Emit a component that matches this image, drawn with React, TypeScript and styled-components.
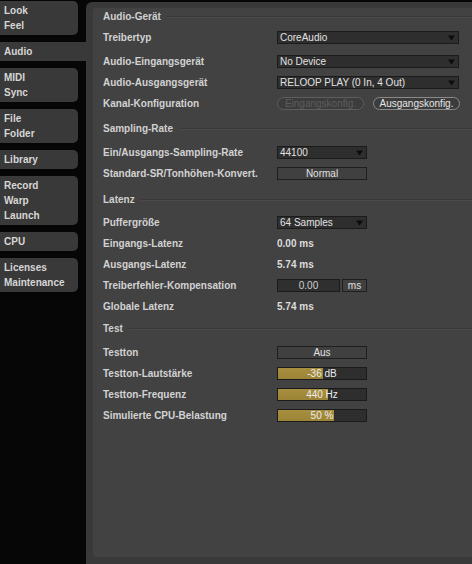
import React from 'react';
import styled, { createGlobalStyle, css } from 'styled-components';

const Global = createGlobalStyle`
  html, body { margin: 0; padding: 0; background: #060606; }
  body {
    font-family: "Liberation Sans", Arial, sans-serif;
    font-size: 10px;
    -webkit-font-smoothing: antialiased;
  }
  #root { width: 472px; height: 564px; overflow: hidden; }
`;

const Page = styled.div`
  display: flex;
  width: 472px;
  height: 564px;
  background: #060606;
  overflow: hidden;
`;

const Sidebar = styled.nav`
  width: 78px;
  flex: none;
  display: flex;
  flex-direction: column;
  gap: 7px;
  padding-top: 1px;
  margin-right: 8px;
  position: relative;
  z-index: 1;
`;

const Tab = styled.div<{ $selected?: boolean }>`
  background: #393939;
  border-radius: 0 5px 5px 0;
  padding: 2px 0 2px 4px;
  color: #d6d6d6;
  font-weight: bold;
  line-height: 15px;
  ${(p) =>
    p.$selected &&
    css`
      margin-right: -8px;
      border-radius: 0;
    `}
`;

const TabLine = styled.div`
  white-space: nowrap;
`;

const Frame = styled.main`
  flex: 1;
  min-width: 0;
  margin-top: 2px;
  background: #393939;
  border-radius: 6px 0 0 0;
  padding: 6px 0 7px 7px;
  display: flex;
`;

const Panel = styled.div`
  flex: 1;
  background: #424242;
  border-radius: 3px 0 0 3px;
  padding: 0 0 0 10px;
  display: flex;
  flex-direction: column;
`;

const Header = styled.div<{ $mt?: number }>`
  display: flex;
  align-items: center;
  height: 16px;
  margin-top: ${(p) => p.$mt ?? 0}px;
  color: #d0d0d0;
  font-weight: bold;
`;

const HeaderRule = styled.div`
  flex: 1;
  height: 1px;
  margin-left: 6px;
  background: #383838;
  box-shadow: 0 1px 0 #4a4a4a;
`;

const Row = styled.div<{ $mt?: number }>`
  display: flex;
  align-items: center;
  height: 21px;
  margin-top: ${(p) => p.$mt ?? 0}px;
`;

const Label = styled.span`
  width: 174px;
  flex: none;
  font-weight: bold;
  color: #d2d2d2;
  white-space: nowrap;
`;

const Select = styled.div<{ $w: number }>`
  width: ${(p) => p.$w}px;
  height: 13px;
  box-sizing: border-box;
  border: 1px solid #1b1b1b;
  background: #2e2e2e;
  color: #e2e2e2;
  display: flex;
  align-items: center;
  padding-left: 2px;
  white-space: nowrap;
`;

const Arrow = styled.svg`
  margin-left: auto;
  margin-right: 3px;
  flex: none;
`;

const Pills = styled.div`
  display: flex;
  gap: 9px;
`;

const Pill = styled.div<{ $disabled?: boolean }>`
  width: 87px;
  height: 13px;
  box-sizing: border-box;
  border-radius: 7px;
  border: 1px solid ${(p) => (p.$disabled ? '#5e5e5e' : '#8a8a8a')};
  background: #3c3c3c;
  color: ${(p) => (p.$disabled ? '#5c5c5c' : '#e6e6e6')};
  display: flex;
  align-items: center;
  justify-content: center;
  white-space: nowrap;
`;

const Toggle = styled.div<{ $w?: number }>`
  width: ${(p) => p.$w ?? 90}px;
  height: 13px;
  box-sizing: border-box;
  border: 1px solid #1e1e1e;
  background: #404040;
  color: #e0e0e0;
  display: flex;
  align-items: center;
  justify-content: center;
`;

const Value = styled.span`
  font-weight: bold;
  color: #dcdcdc;
`;

const NumberGroup = styled.div`
  display: flex;
  gap: 2px;
`;

const NumberBox = styled.div`
  width: 63px;
  height: 13px;
  box-sizing: border-box;
  border: 1px solid #1b1b1b;
  background: #2f2f2f;
  color: #cfcfcf;
  display: flex;
  align-items: center;
  justify-content: center;
`;

const Slider = styled.div`
  width: 90px;
  height: 13px;
  box-sizing: border-box;
  border: 1px solid #1b1b1b;
  background: #2e2e2e;
  position: relative;
  display: flex;
  align-items: center;
  justify-content: center;
  color: #ececec;
`;

const SliderFill = styled.div`
  position: absolute;
  left: 0;
  top: 0;
  bottom: 0;
  background: linear-gradient(#a88f3f, #9c8436);
`;

const SliderText = styled.span`
  position: relative;
  white-space: nowrap;
`;

const DownArrow = () => (
  <Arrow width="7" height="6" viewBox="0 0 7 6">
    <path d="M0 0.5 H7 L3.5 5.5 Z" fill="#0c0c0c" />
  </Arrow>
);

const tabs: string[][] = [
  ['Look', 'Feel'],
  ['Audio'],
  ['MIDI', 'Sync'],
  ['File', 'Folder'],
  ['Library'],
  ['Record', 'Warp', 'Launch'],
  ['CPU'],
  ['Licenses', 'Maintenance'],
];

const sliders = [
  { label: 'Testton-Lautstärke', text: '-36 dB', fill: 45 },
  { label: 'Testton-Frequenz', text: '440 Hz', fill: 50 },
  { label: 'Simulierte CPU-Belastung', text: '50 %', fill: 56 },
];

export default function App() {
  return (
    <>
      <Global />
      <Page>
        <Sidebar>
          {tabs.map((t) => (
            <Tab key={t[0]} $selected={t[0] === 'Audio'}>
              {t.map((l) => (
                <TabLine key={l}>{l}</TabLine>
              ))}
            </Tab>
          ))}
        </Sidebar>
        <Frame>
          <Panel>
            <Header>
              Audio-Gerät
              <HeaderRule />
            </Header>
            <Row $mt={3}>
              <Label>Treibertyp</Label>
              <Select $w={182}>
                CoreAudio
                <DownArrow />
              </Select>
            </Row>
            <Row $mt={3}>
              <Label>Audio-Eingangsgerät</Label>
              <Select $w={182}>
                No Device
                <DownArrow />
              </Select>
            </Row>
            <Row>
              <Label>Audio-Ausgangsgerät</Label>
              <Select $w={182}>
                RELOOP PLAY (0 In, 4 Out)
                <DownArrow />
              </Select>
            </Row>
            <Row>
              <Label>Kanal-Konfiguration</Label>
              <Pills>
                <Pill $disabled>Eingangskonfig.</Pill>
                <Pill>Ausgangskonfig.</Pill>
              </Pills>
            </Row>

            <Header $mt={6}>
              Sampling-Rate
              <HeaderRule />
            </Header>
            <Row $mt={6}>
              <Label>Ein/Ausgangs-Sampling-Rate</Label>
              <Select $w={90}>
                44100
                <DownArrow />
              </Select>
            </Row>
            <Row>
              <Label>Standard-SR/Tonhöhen-Konvert.</Label>
              <Toggle>Normal</Toggle>
            </Row>

            <Header $mt={7}>
              Latenz
              <HeaderRule />
            </Header>
            <Row $mt={5}>
              <Label>Puffergröße</Label>
              <Select $w={90}>
                64 Samples
                <DownArrow />
              </Select>
            </Row>
            <Row>
              <Label>Eingangs-Latenz</Label>
              <Value>0.00 ms</Value>
            </Row>
            <Row>
              <Label>Ausgangs-Latenz</Label>
              <Value>5.74 ms</Value>
            </Row>
            <Row>
              <Label>Treiberfehler-Kompensation</Label>
              <NumberGroup>
                <NumberBox>0.00</NumberBox>
                <Toggle $w={25}>ms</Toggle>
              </NumberGroup>
            </Row>
            <Row>
              <Label>Globale Latenz</Label>
              <Value>5.74 ms</Value>
            </Row>

            <Header $mt={3}>
              Test
              <HeaderRule />
            </Header>
            <Row $mt={6}>
              <Label>Testton</Label>
              <Toggle>Aus</Toggle>
            </Row>
            {sliders.map((s) => (
              <Row key={s.label}>
                <Label>{s.label}</Label>
                <Slider>
                  <SliderFill style={{ width: s.fill }} />
                  <SliderText>{s.text}</SliderText>
                </Slider>
              </Row>
            ))}
          </Panel>
        </Frame>
      </Page>
    </>
  );
}
